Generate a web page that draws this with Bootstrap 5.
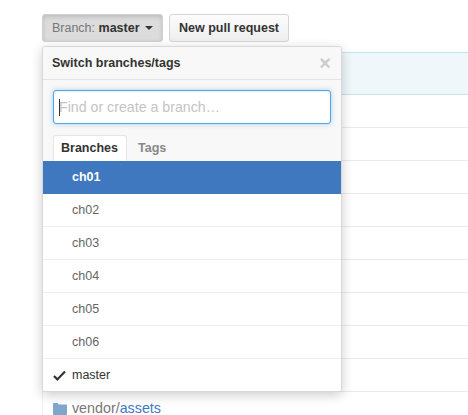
<!DOCTYPE html>
<html lang="en">
<head>
  <meta charset="UTF-8">
  <title>Switch branches</title>
  <link href="https://cdn.jsdelivr.net/npm/bootstrap@5.3.0/dist/css/bootstrap.min.css" rel="stylesheet">
  <style>
    html, body { height: 415px; overflow: hidden; }
    body { background: #fff; font-family: "Liberation Sans", Arial, sans-serif; font-size: 13px; color: #333; }
    .page-wrap { position: relative; padding: 14px 0 0 42px; }

    .gh-btn { height: 28px; padding: 0; font-size: 12.5px; font-weight: 700; line-height: 26px; white-space: nowrap; color: #333; border: 1px solid #d5d5d5; border-radius: 3px; background: linear-gradient(#fcfcfc, #eee); }
    .gh-btn.is-open { background: #dcdcdc; border-color: #cfcfcf; box-shadow: inset 0 2px 4px rgba(0,0,0,.15); width: 121px; }
    .gh-btn .dim { font-weight: 400; color: #777; }
    .caret-down { display: inline-block; margin-left: 2px; vertical-align: 2px; border-top: 4px solid #333; border-left: 4px solid transparent; border-right: 4px solid transparent; }
    .btn-second { width: 120px; margin-left: 6px; }

    .file-rows { margin-top: 10px; border-left: 1px solid #eee; }
    .file-row { height: 33px; border-bottom: 1px solid #eaeaea; }
    .file-row.notice { height: 43px; background: #eff7fb; border-top: 1px solid #c5e3f2; border-bottom: 1px solid #c5e3f2; }
    .file-row.last { border-bottom: 0; padding: 6px 0 0 10px; font-size: 14.3px; color: #777; white-space: nowrap; }
    .file-row.last a { color: #4078c0; text-decoration: none; }
    .folder-ico { vertical-align: -2px; margin-right: 1px; }

    .branch-menu { position: absolute; left: 42px; top: 46px; width: 300px; height: 346px; background: #fff; border: 1px solid #d8d8d8; border-radius: 3px; box-shadow: 0 3px 12px rgba(0,0,0,.2); overflow: hidden; }
    .menu-head { height: 33px; padding: 0 10px 0 9px; background: #f8f8f8; border-bottom: 1px solid #e5e5e5; font-size: 12.5px; font-weight: 700; color: #333; }
    .menu-x { font-size: 20px; font-weight: 700; line-height: 1; color: #ccc; }
    .menu-filter { position: relative; background: #f8f8f8; padding: 10px 10px 0; }
    .menu-filter .form-control { height: 34px; padding: 0 5px; font-size: 14.2px; font-family: inherit; border: 1px solid #51a7e8; border-radius: 3px; box-shadow: inset 0 1px 2px rgba(0,0,0,.075), 0 0 5px rgba(81,167,232,.5); }
    .menu-filter .form-control::placeholder { color: #c4c4c4; }
    .text-cursor { position: absolute; left: 16px; top: 19px; width: 1px; height: 17px; background: #333; }
    .branch-tabs { margin-top: 11px; height: 26px; border-bottom: 0; gap: 0; }
    .branch-tabs .nav-link { height: 26px; padding: 0 8px 0 7px; line-height: 25px; font-size: 12.5px; font-weight: 700; color: #888; border: 1px solid transparent; border-radius: 3px 3px 0 0; margin: 0; }
    .branch-tabs .nav-link.active { color: #333; background: #fff; border-color: #e5e5e5 #e5e5e5 #fff; }
    .branch-tabs .nav-link.second-tab { padding-left: 10px; }

    .branch-list .list-group-item { height: 33px; padding: 0 0 0 10px; display: flex; align-items: center; font-size: 12.5px; color: #666; border: 0; border-bottom: 1px solid #eee; border-radius: 0; }
    .branch-list .list-group-item.active { background: #4078c0; color: #fff; font-weight: 700; border-color: #4078c0; margin: 0; }
    .branch-list .list-group-item:last-child { border-bottom: 0; color: #333; }
    .tick-slot { width: 19px; flex: none; display: flex; }
  </style>
</head>
<body>
  <div class="page-wrap">
    <div class="d-flex">
      <button class="btn gh-btn is-open" type="button"><span class="dim">Branch:</span> master <span class="caret-down"></span></button>
      <button class="btn gh-btn btn-second" type="button">New pull request</button>
    </div>

    <!-- file table behind the menu -->
    <div class="file-rows">
      <div class="file-row notice"></div>
      <div class="file-row"></div>
      <div class="file-row"></div>
      <div class="file-row"></div>
      <div class="file-row"></div>
      <div class="file-row"></div>
      <div class="file-row"></div>
      <div class="file-row"></div>
      <div class="file-row"></div>
      <div class="file-row"></div>
      <div class="file-row last">
        <svg class="folder-ico" width="14" height="12" viewBox="0 0 14 12"><path fill="#80a6cd" d="M0 1.2C0 .5.4 0 1 0h3.6l1 1.4H13c.6 0 1 .4 1 1V11c0 .6-.4 1-1 1H1c-.6 0-1-.4-1-1z"/></svg>
        vendor/<a href="#">assets</a>
      </div>
    </div>

    <!-- branch dropdown -->
    <div class="branch-menu">
      <div class="menu-head d-flex align-items-center justify-content-between">
        <span>Switch branches/tags</span>
        <span class="menu-x">×</span>
      </div>
      <div class="menu-filter">
        <input type="text" class="form-control" placeholder="Find or create a branch…">
        <span class="text-cursor"></span>
        <ul class="nav nav-tabs branch-tabs">
          <li class="nav-item"><a class="nav-link active" href="#">Branches</a></li>
          <li class="nav-item"><a class="nav-link second-tab" href="#">Tags</a></li>
        </ul>
      </div>
      <div class="list-group branch-list" id="branchList"></div>
    </div>
  </div>

  <script>
    const branches = ["ch01", "ch02", "ch03", "ch04", "ch05", "ch06", "master"];
    const tick = `<svg width="13" height="11" viewBox="0 0 13 11"><path fill="none" stroke="#333" stroke-width="2.2" d="M1 6l3.4 3.4L12 1.6"/></svg>`;
    document.getElementById("branchList").innerHTML = branches.map((name, i) => `
      <div class="list-group-item ${i === 0 ? "active" : ""}">
        <span class="tick-slot">${name === "master" ? tick : ""}</span><span>${name}</span>
      </div>`).join("");
  </script>
</body>
</html>
